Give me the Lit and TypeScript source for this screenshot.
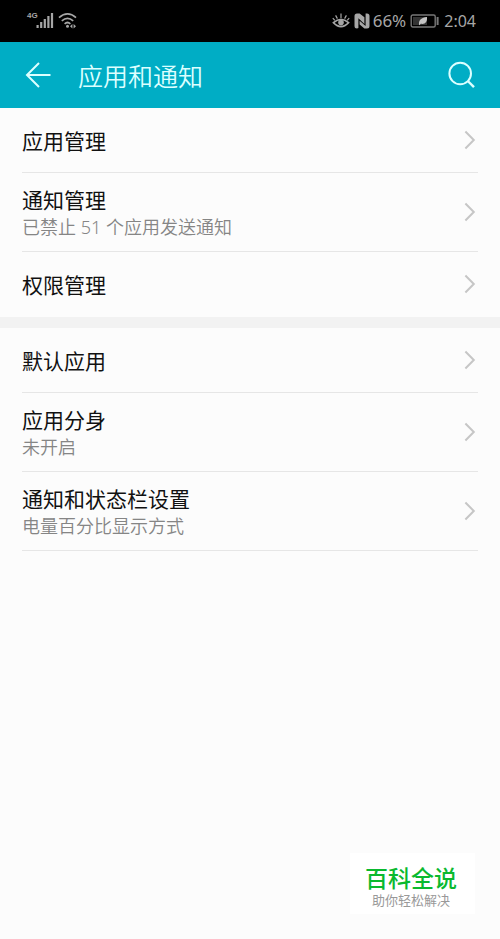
import { LitElement, html, css, svg, nothing } from "lit";
import { customElement, property } from "lit/decorators.js";

interface Item {
  title: string;
  note?: string;
}

const groups: Item[][] = [
  [
    { title: "应用管理" },
    { title: "通知管理", note: "已禁止 51 个应用发送通知" },
    { title: "权限管理" },
  ],
  [
    { title: "默认应用" },
    { title: "应用分身", note: "未开启" },
    { title: "通知和状态栏设置", note: "电量百分比显示方式" },
  ],
];

@customElement("status-bar")
class StatusBar extends LitElement {
  static styles = css`
    :host {
      display: flex;
      align-items: center;
      justify-content: space-between;
      height: 42px;
      padding: 0 24px 0 27px;
      box-sizing: border-box;
      background: #000;
      color: #a6a6a6;
      font: 17px/24px "Noto Sans", "Open Sans", sans-serif;
    }
    .side {
      display: flex;
      align-items: center;
      gap: 4px;
    }
    .power {
      margin-left: -2px;
    }
    svg {
      display: block;
    }
    .net {
      margin-right: -2px;
      font: 700 8px/8px "Liberation Sans", sans-serif;
      align-self: flex-start;
    }
    .signal {
      display: flex;
    }
    time {
      font-size: 16px;
    }
  `;

  render() {
    return html`
      <div class="side">
        <div class="signal">
          <span class="net">4G</span>
          <svg width="18" height="18" viewBox="0 0 18 18" fill="#a6a6a6" aria-hidden="true">
            ${[3, 6, 9, 12, 15].map(
              (h, i) => svg`<rect x=${i * 3.6 + 0.5} y=${16 - h} width="2.2" height=${h} />`
            )}
          </svg>
        </div>
        <svg width="20" height="18" viewBox="0 0 20 18" fill="none" stroke="#a6a6a6" stroke-width="1.7" aria-hidden="true">
          <path d="M1 5.6Q9.5 -1.8 18 5.6M3.8 8.8Q9.5 3.8 15.2 8.8M6.6 11.8Q9.5 9.2 12.4 11.8" />
          <circle cx="9.5" cy="14.2" r="1.5" fill="#a6a6a6" stroke="none" />
          <path d="M14.4 12L12 14.2L14.4 16.4ZM15.6 12L18 14.2L15.6 16.4Z" fill="#a6a6a6" stroke="none" />
        </svg>
      </div>
      <div class="side">
        <svg width="18" height="18" viewBox="0 0 18 18" fill="none" stroke="#a6a6a6" stroke-width="1.6" aria-hidden="true">
          <path d="M1.4 10.6Q9 4 16.6 10.6Q9 18.6 1.4 10.6Z" />
          <circle cx="9" cy="10.6" r="2.8" fill="#a6a6a6" stroke="none" />
          <path d="M9 1.6V6M3.6 3.4L5.4 6.6M14.4 3.4L12.6 6.6M0.8 6.2L2.8 8.4M17.2 6.2L15.2 8.4" stroke-width="1.2" />
        </svg>
        <svg width="17" height="16" viewBox="0 0 17 16" aria-hidden="true">
          <path d="M3 0.5Q0.5 0.5 0.5 3V13Q0.5 15.5 3 15.5L4.4 15.1V5.2L10.4 11V4.2L5.6 0.5Z" fill="#a6a6a6" />
          <path d="M13 0.5Q15.5 0.5 15.5 3V13Q15.5 15.5 13 15.5H10.4L5.6 11.6V7.8L11.6 13V0.5Z" fill="#a6a6a6" />
        </svg>
        <span class="power">66%</span>
        <svg width="30" height="14" viewBox="0 0 30 14" aria-hidden="true">
          <rect x="1.2" y="1" width="24" height="12" rx="1.5" fill="#000" stroke="#777" stroke-width="1.4" />
          <rect x="3" y="3" width="14" height="8" fill="#333" />
          <path d="M9 10.8C8.6 6 11.5 3.4 17 3C17.4 7.8 15.4 10.6 10.8 9.8L9.4 11.2Z" fill="#c4c4c4" />
          <rect x="26.6" y="3" width="2" height="8" fill="#777" />
        </svg>
        <time>2:04</time>
      </div>
    `;
  }
}

@customElement("settings-row")
class SettingsRow extends LitElement {
  @property() heading = "";
  @property() note = "";

  static styles = css`
    :host {
      display: block;
    }
    .row {
      display: flex;
      align-items: center;
      justify-content: space-between;
      width: 100%;
      min-height: 64px;
      padding: 11px 0;
      box-sizing: border-box;
      border: 0;
      background: none;
      color: #111;
      font: inherit;
      text-align: left;
      cursor: pointer;
    }
    .text {
      display: flex;
      flex-direction: column;
      padding-top: 2px;
    }
    .heading {
      font-size: 21px;
      line-height: 28px;
    }
    .note {
      color: #858585;
      font-size: 18px;
      font-weight: 350;
      line-height: 26px;
    }
    svg {
      flex: none;
    }
  `;

  render() {
    return html`
      <button class="row" type="button">
        <span class="text">
          <span class="heading">${this.heading}</span>
          ${this.note ? html`<span class="note">${this.note}</span>` : nothing}
        </span>
        <svg width="16" height="20" viewBox="0 0 16 20" fill="none" stroke="#c6c6c6" stroke-width="2" aria-hidden="true">
          <path d="M3.4 1.5L11.8 10L3.4 18.5" />
        </svg>
      </button>
    `;
  }
}

@customElement("app-root")
class AppRoot extends LitElement {
  static styles = css`
    :host {
      display: block;
      min-height: 100vh;
      background: #fcfcfc;
      font-family: "Noto Sans", "Noto Sans CJK SC", sans-serif;
    }
    .bar {
      display: flex;
      align-items: center;
      height: 66px;
      padding: 0 22px;
      background: #00adc5;
      color: #dcffff;
    }
    h1 {
      flex: 1;
      margin: 0 0 0 24px;
      padding-top: 2px;
      font-size: 25px;
      font-weight: 350;
      line-height: 36px;
    }
    .icon {
      padding: 0;
      border: 0;
      background: none;
      color: inherit;
      cursor: pointer;
    }
    .icon svg {
      display: block;
    }
    .group {
      margin: 0;
      padding: 0 22px;
      list-style: none;
    }
    .group + .group {
      border-top: 11px solid #f2f2f2;
    }
    .item {
      border-bottom: 1px solid #e6e6e6;
    }
    .group:not(:last-of-type) .item:last-child {
      border-bottom-color: transparent;
    }
    .badge {
      position: fixed;
      right: 25px;
      bottom: 25px;
      display: flex;
      flex-direction: column;
      align-items: center;
      padding: 13px 18px 4px 15px;
      background: #fff;
      font-family: "Liberation Sans", "Noto Sans CJK SC", sans-serif;
    }
    .brand {
      color: #0ab92f;
      font-size: 23px;
      font-weight: 500;
      line-height: 26px;
    }
    .motto {
      color: #999;
      font-size: 13px;
      line-height: 18px;
    }
  `;

  render() {
    return html`
      <status-bar></status-bar>
      <header class="bar">
        <button class="icon" type="button" aria-label="返回">
          <svg width="32" height="32" viewBox="0 0 32 32" fill="none" stroke="currentColor" stroke-width="2" aria-hidden="true">
            <path d="M28.5 16H5M17 4L5 16L17 28" />
          </svg>
        </button>
        <h1>应用和通知</h1>
        <button class="icon" type="button" aria-label="搜索">
          <svg width="32" height="32" viewBox="0 0 32 32" fill="none" stroke="currentColor" stroke-width="2" aria-hidden="true">
            <circle cx="14.2" cy="14.5" r="10.8" />
            <path d="M21.8 22L28 28.2" stroke-width="2.4" />
          </svg>
        </button>
      </header>
      <main>
        ${groups.map(
          (items) => html`
            <ul class="group">
              ${items.map(
                (item) => html`
                  <li class="item">
                    <settings-row .heading=${item.title} .note=${item.note ?? ""}></settings-row>
                  </li>
                `
              )}
            </ul>
          `
        )}
      </main>
      <aside class="badge">
        <span class="brand">百科全说</span>
        <span class="motto">助你轻松解决</span>
      </aside>
    `;
  }
}
